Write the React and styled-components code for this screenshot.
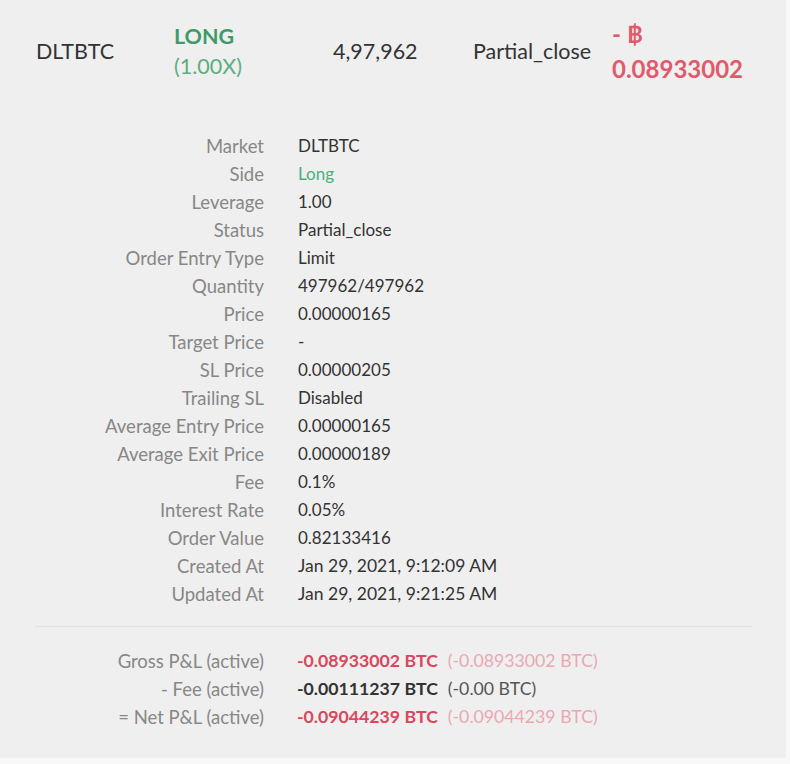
import React from "react";
import styled, { createGlobalStyle } from "styled-components";

const Global = createGlobalStyle`
  html, body { margin: 0; padding: 0; background: #f8f8f8; }
  body { font-family: "Lato", "Open Sans", sans-serif; }
`;

const Panel = styled.div`
  width: 786px;
  height: 758px;
  background: #efefef;
  box-sizing: border-box;
  padding-top: 16px;
`;

const Header = styled.div`
  display: grid;
  grid-template-columns: 138px 159px 140px 139px 1fr;
  align-items: center;
  padding-left: 36px;
  font-size: 21.5px;
  color: #333;
`;

const Cell = styled.div`
  line-height: 30px;
  color: ${(p) => p.$color || "#333"};
  font-weight: ${(p) => (p.$bold ? 700 : 400)};
`;

const Amount = styled.div`
  color: #e05a6c;
  font-weight: 700;
  font-size: 24px;
  line-height: 35px;
`;

const Details = styled.div`
  display: grid;
  grid-template-columns: 264px 1fr;
  column-gap: 34px;
  margin-top: 46px;
  font-size: 17px;
  line-height: 28px;
`;

const Label = styled.div`
  text-align: right;
  color: #878787;
  font-size: 18.5px;
`;

const Value = styled.div`
  color: ${(p) => p.$color || "#333"};
  font-size: ${(p) => p.$size || "17px"};
`;

const Divider = styled.hr`
  border: none;
  border-top: 1px solid #e2e2e2;
  margin: 18px 34px 20px 35px;
`;

const Pnl = styled.div`
  display: grid;
  grid-template-columns: 264px 1fr;
  column-gap: 33px;
  font-size: 17.7px;
  line-height: 28px;
`;

const PnlValue = styled.div`
  display: flex;
  gap: 10px;
`;

const Main = styled.span`
  font-weight: 700;
  color: ${(p) => (p.$red ? "#d9475f" : "#333")};
`;

const Sub = styled.span`
  color: ${(p) => (p.$red ? "#eba8b3" : "#555")};
`;

const rows = [
  ["Market", "DLTBTC"],
  ["Side", "Long", "#4caf7a"],
  ["Leverage", "1.00"],
  ["Status", "Partial_close"],
  ["Order Entry Type", "Limit"],
  ["Quantity", "497962/497962"],
  ["Price", "0.00000165"],
  ["Target Price", "-"],
  ["SL Price", "0.00000205"],
  ["Trailing SL", "Disabled"],
  ["Average Entry Price", "0.00000165"],
  ["Average Exit Price", "0.00000189"],
  ["Fee", "0.1%"],
  ["Interest Rate", "0.05%"],
  ["Order Value", "0.82133416"],
  ["Created At", "Jan 29, 2021, 9:12:09 AM"],
  ["Updated At", "Jan 29, 2021, 9:21:25 AM"],
];

const pnl = [
  ["Gross P&L (active)", "-0.08933002 BTC", "(-0.08933002 BTC)", true],
  ["- Fee (active)", "-0.00111237 BTC", "(-0.00 BTC)", false],
  ["= Net P&L (active)", "-0.09044239 BTC", "(-0.09044239 BTC)", true],
];

export default function App() {
  return (
    <>
      <Global />
      <Panel>
        <Header>
          <Cell>DLTBTC</Cell>
          <div>
            <Cell $color="#3f9a68" $bold>LONG</Cell>
            <Cell $color="#5aae7f">(1.00X)</Cell>
          </div>
          <Cell>4,97,962</Cell>
          <Cell>Partial_close</Cell>
          <div>
            <Amount>- ฿</Amount>
            <Amount>0.08933002</Amount>
          </div>
        </Header>
        <Details>
          {rows.map(([l, v, c]) => (
            <React.Fragment key={l}>
              <Label>{l}</Label>
              <Value $color={c} $size={v.startsWith("Jan") ? "17.5px" : undefined}>{v}</Value>
            </React.Fragment>
          ))}
        </Details>
        <Divider />
        <Pnl>
          {pnl.map(([l, a, b, red]) => (
            <React.Fragment key={l}>
              <Label>{l}</Label>
              <PnlValue>
                <Main $red={red}>{a}</Main>
                <Sub $red={red}>{b}</Sub>
              </PnlValue>
            </React.Fragment>
          ))}
        </Pnl>
      </Panel>
    </>
  );
}
